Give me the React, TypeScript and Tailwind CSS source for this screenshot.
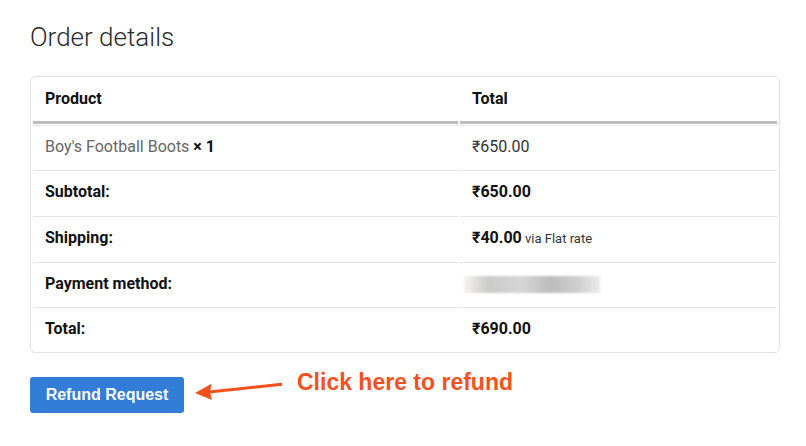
import React from 'react';

type Row = { label: string; value: React.ReactNode };

const rows: Row[] = [
  { label: 'Subtotal:', value: <span className="font-bold">₹650.00</span> },
  {
    label: 'Shipping:',
    value: (
      <>
        <span className="font-bold">₹40.00</span>
        <span className="text-[13px] text-[#333]">&nbsp;via Flat rate</span>
      </>
    ),
  },
  {
    label: 'Payment method:',
    value: (
      <span className="-ml-[8px] inline-block align-middle w-[136px] h-[17px] blur-[1px] bg-[linear-gradient(90deg,#f5f4f2_0%,#cacaca_18%,#d6d6d6_42%,#bcbcbc_64%,#cfcfcf_84%,#ebebeb_100%)]" />
    ),
  },
  { label: 'Total:', value: <span className="font-bold">₹690.00</span> },
];

const cell = 'border-t border-[#e4e4e4] px-[12px] pt-[11px] pb-[12.3px] leading-[20px] text-left align-top';

const App: React.FC = () => {
  return (
    <div className="min-h-[446px] bg-white px-[30px] pt-[20px] font-['Roboto',sans-serif] text-[16px] text-[#111]">
      <h2 className="text-[26px] font-light leading-[34px] text-[#2a2a2a] mb-[22px]">Order details</h2>

      <table className="w-[750px] border border-[#e2e2e2] rounded-[5px] border-separate border-spacing-x-[2px] border-spacing-y-[1px]">
        <thead>
          <tr>
            <th className="w-[425px] border-b-[3px] border-[#bdbdbd] px-[12px] pt-[11px] pb-[12px] leading-[20px] text-left font-bold">
              Product
            </th>
            <th className="border-b-[3px] border-[#bdbdbd] px-[12px] pt-[11px] pb-[12px] leading-[20px] text-left font-bold">
              Total
            </th>
          </tr>
        </thead>
        <tbody>
          <tr>
            <td className={cell}>
              <span className="text-[#666]">Boy's Football Boots</span>{' '}
              <strong className="font-bold text-[#111]">×&nbsp;1</strong>
            </td>
            <td className={`${cell} text-[#333]`}>₹650.00</td>
          </tr>
          {rows.map((r) => (
            <tr key={r.label}>
              <th className={`${cell} font-bold`}>{r.label}</th>
              <td className={cell}>{r.value}</td>
            </tr>
          ))}
        </tbody>
      </table>

      <div className="mt-[16px] flex items-start">
        <button className="mt-[8px] w-[154px] h-[36px] rounded-[3px] bg-[#317dd8] text-white text-[16px] font-bold font-['Liberation_Sans',Arial,sans-serif]">
          Refund Request
        </button>
        <svg className="ml-[10px] mt-[11px]" width="90" height="22" viewBox="0 0 90 22">
          <path d="M1 13 L17.5 3.7 L16 12 L18 20 Z" fill="#f4511e" />
          <line x1="15" y1="12" x2="88" y2="4.3" stroke="#f4511e" strokeWidth="3" />
        </svg>
        <span className="ml-[13px] text-[23px] leading-[26px] font-bold text-[#f4511e] font-['Liberation_Sans',Arial,sans-serif]">
          Click here to refund
        </span>
      </div>
    </div>
  );
};

export default App;
